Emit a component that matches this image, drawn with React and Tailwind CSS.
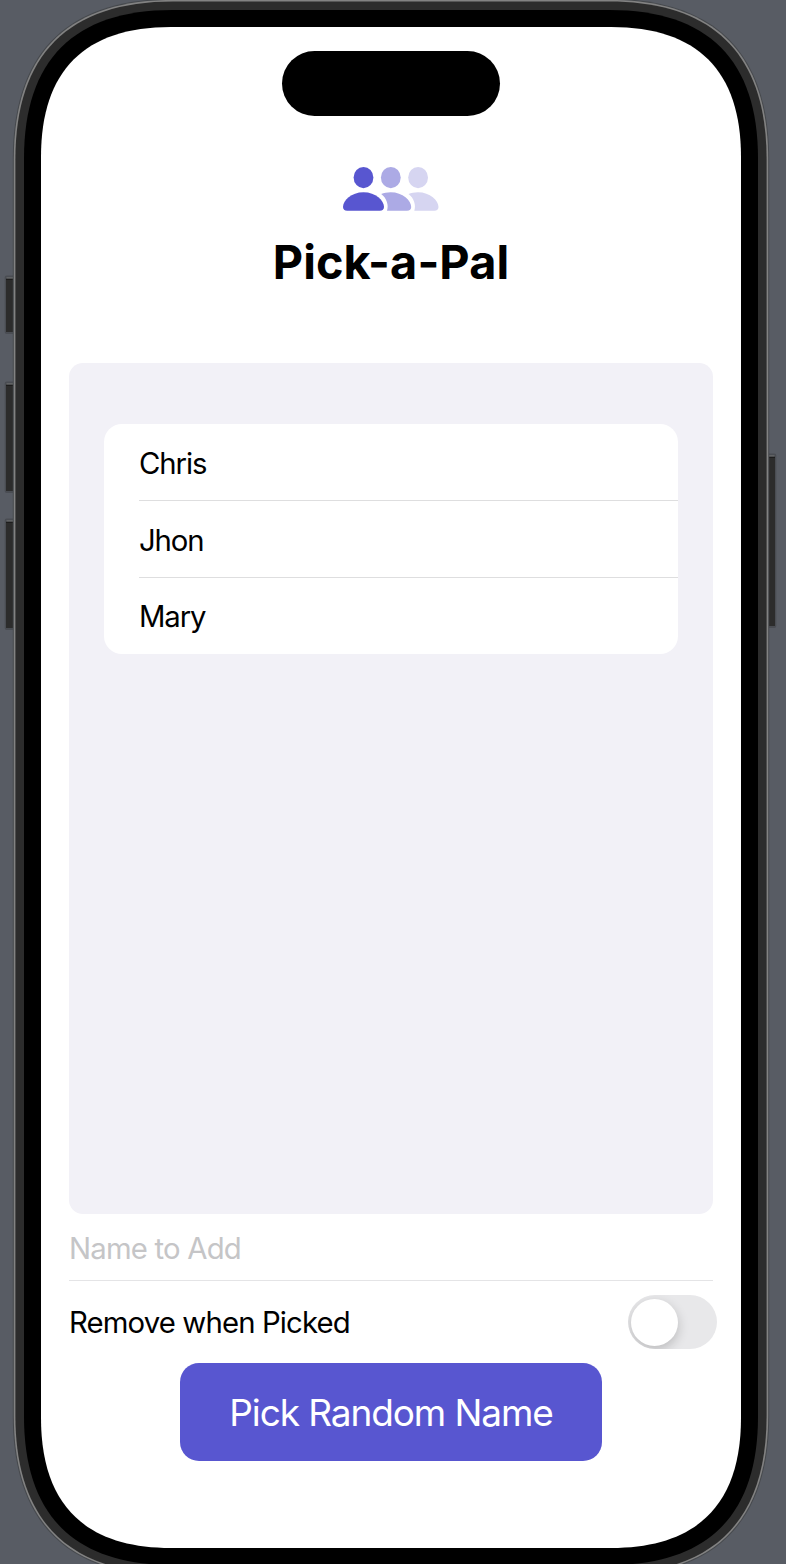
const names = ['Chris', 'Jhon', 'Mary'];

// Rounded rectangle whose corners ease gradually into the straight edges.
function smoothRect(x, y, w, h, r) {
  const a = 1.16 * r;
  const c = 0.39 * r;
  const R = x + w;
  const B = y + h;
  return [
    `M${x + a} ${y}H${R - a}`,
    `C${R - c} ${y} ${R} ${y + c} ${R} ${y + a}`,
    `V${B - a}`,
    `C${R} ${B - c} ${R - c} ${B} ${R - a} ${B}`,
    `H${x + a}`,
    `C${x + c} ${B} ${x} ${B - c} ${x} ${B - a}`,
    `V${y + a}`,
    `C${x} ${y + c} ${x + c} ${y} ${x + a} ${y}Z`,
  ].join('');
}

function SideKey({ x, y, w, h }) {
  return (
    <g>
      <rect x={x - 1.3} y={y - 3.5} width={w + 2.6} height={h + 5.5} rx="2" fill="#4a4d53" />
      <rect x={x + 0.5} y={y - 1.7} width={w - 1} height="1.5" fill="#6a6b6d" />
      <rect x={x} y={y} width={w} height={h} rx="0.5" fill="#2c2c2c" />
      <rect x={x} y={y - 0.3} width={w} height="1.3" fill="#1d1d1d" />
    </g>
  );
}

function DeviceFrame() {
  return (
    <svg className="absolute inset-0" width="786" height="1564" viewBox="0 0 786 1564" aria-hidden="true">
      <SideKey x={6} y={279} w={9} h={53} />
      <SideKey x={6} y={385} w={9} h={106} />
      <SideKey x={6} y={522} w={9} h={106} />
      <SideKey x={767} y={457} w={8} h={169} />
      <path d={smoothRect(12.8, -1.2, 756.4, 1577.4, 138.5)} fill="#46494d" />
      <path d={smoothRect(13.8, -0.1, 754.4, 1575.2, 137.5)} fill="#828282" />
      <path d={smoothRect(15.4, 1.4, 751.2, 1572.2, 136)} fill="#2c2c2c" />
      <path d={smoothRect(24, 10, 734, 1555, 128)} fill="#000000" />
      <path d={smoothRect(41, 27, 700, 1521, 112)} fill="#ffffff" />
    </svg>
  );
}

function PeopleIcon() {
  return (
    <svg className="h-[44px] w-[96px]" viewBox="0 0 96 44" aria-hidden="true">
      <ellipse cx="20.5" cy="10.6" rx="9.9" ry="10.6" fill="#5856d0" />
      <path d="M4.2 43.7C1.5 43.7 0 42.4 0 40C0 33.4 8.2 25.2 20.5 25.2C32.8 25.2 41 33.4 41 40C41 42.4 39.5 43.7 36.8 43.7Z" fill="#5856d0" />
      <ellipse cx="47.8" cy="10.6" rx="9.9" ry="10.6" fill="#acaae5" />
      <path d="M38.2 27.1C40.9 25.9 44.1 25.2 47.6 25.2C59.9 25.2 68.2 33.4 68.2 40C68.2 42.4 66.7 43.7 64 43.7H44C45.9 38.4 43.8 31.3 38.2 27.1Z" fill="#acaae5" />
      <ellipse cx="75.1" cy="10.6" rx="9.9" ry="10.6" fill="#d6d5f1" />
      <path d="M65.5 27.1C68.2 25.9 71.4 25.2 74.9 25.2C87.2 25.2 95.5 33.4 95.5 40C95.5 42.4 94 43.7 91.3 43.7H71.3C73.2 38.4 71.1 31.3 65.5 27.1Z" fill="#d6d5f1" />
    </svg>
  );
}

export default function App() {
  return (
    <div className="relative h-[1564px] w-[786px] overflow-hidden bg-[#585c64] font-['Inter',sans-serif] text-black">
      <DeviceFrame />
      <main className="relative ml-[41px] flex w-[700px] flex-col items-center px-7 pt-[51px]">
        <div className="h-[65px] w-[218px] rounded-full bg-black" />
        <header className="mt-[51px] flex flex-col items-center">
          <PeopleIcon />
          <h1 className="mt-[19px] text-[46.8px] leading-[64px] font-bold tracking-[0.1px] whitespace-nowrap">Pick-a-Pal</h1>
        </header>

        <section className="mt-[69.3px] h-[851px] w-full rounded-[14px] bg-[#f2f1f7] px-[35px] pt-[61px]">
          <ul className="rounded-[18px] bg-white pl-[35px]">
            {names.map((name) => (
              <li
                key={name}
                className="flex h-[76.8px] items-center border-b border-[#dededf] pt-[3px] text-[29.3px] tracking-[-1.1px] last:h-[76px] last:border-b-0"
              >
                {name}
              </li>
            ))}
          </ul>
        </section>

        <input
          className="h-[67px] w-full border-b-[1.5px] border-[#e4e4e6] bg-transparent pt-[2px] text-[29.3px] tracking-[-0.8px] outline-none placeholder:text-[#c5c5c7] placeholder:opacity-100"
          placeholder="Name to Add"
        />

        <label className="mt-[14px] flex w-full items-center justify-between text-[29.3px]">
          <span className="pt-[1px] tracking-[-0.86px] whitespace-nowrap">Remove when Picked</span>
          <span className="-mr-1 flex h-[54px] w-[89px] shrink-0 items-center overflow-hidden rounded-full bg-[#e8e8ea] pl-[3px]">
            <span className="h-[47px] w-[47px] rounded-full bg-white shadow-[0_4px_12px_rgba(0,0,0,0.2)]" />
          </span>
        </label>

        <button className="mt-[13.7px] h-[98px] w-[422px] rounded-[19px] bg-[#5856d0] pt-px text-[37px] tracking-[-1.1px] text-white">
          Pick Random Name
        </button>
      </main>
    </div>
  );
}
